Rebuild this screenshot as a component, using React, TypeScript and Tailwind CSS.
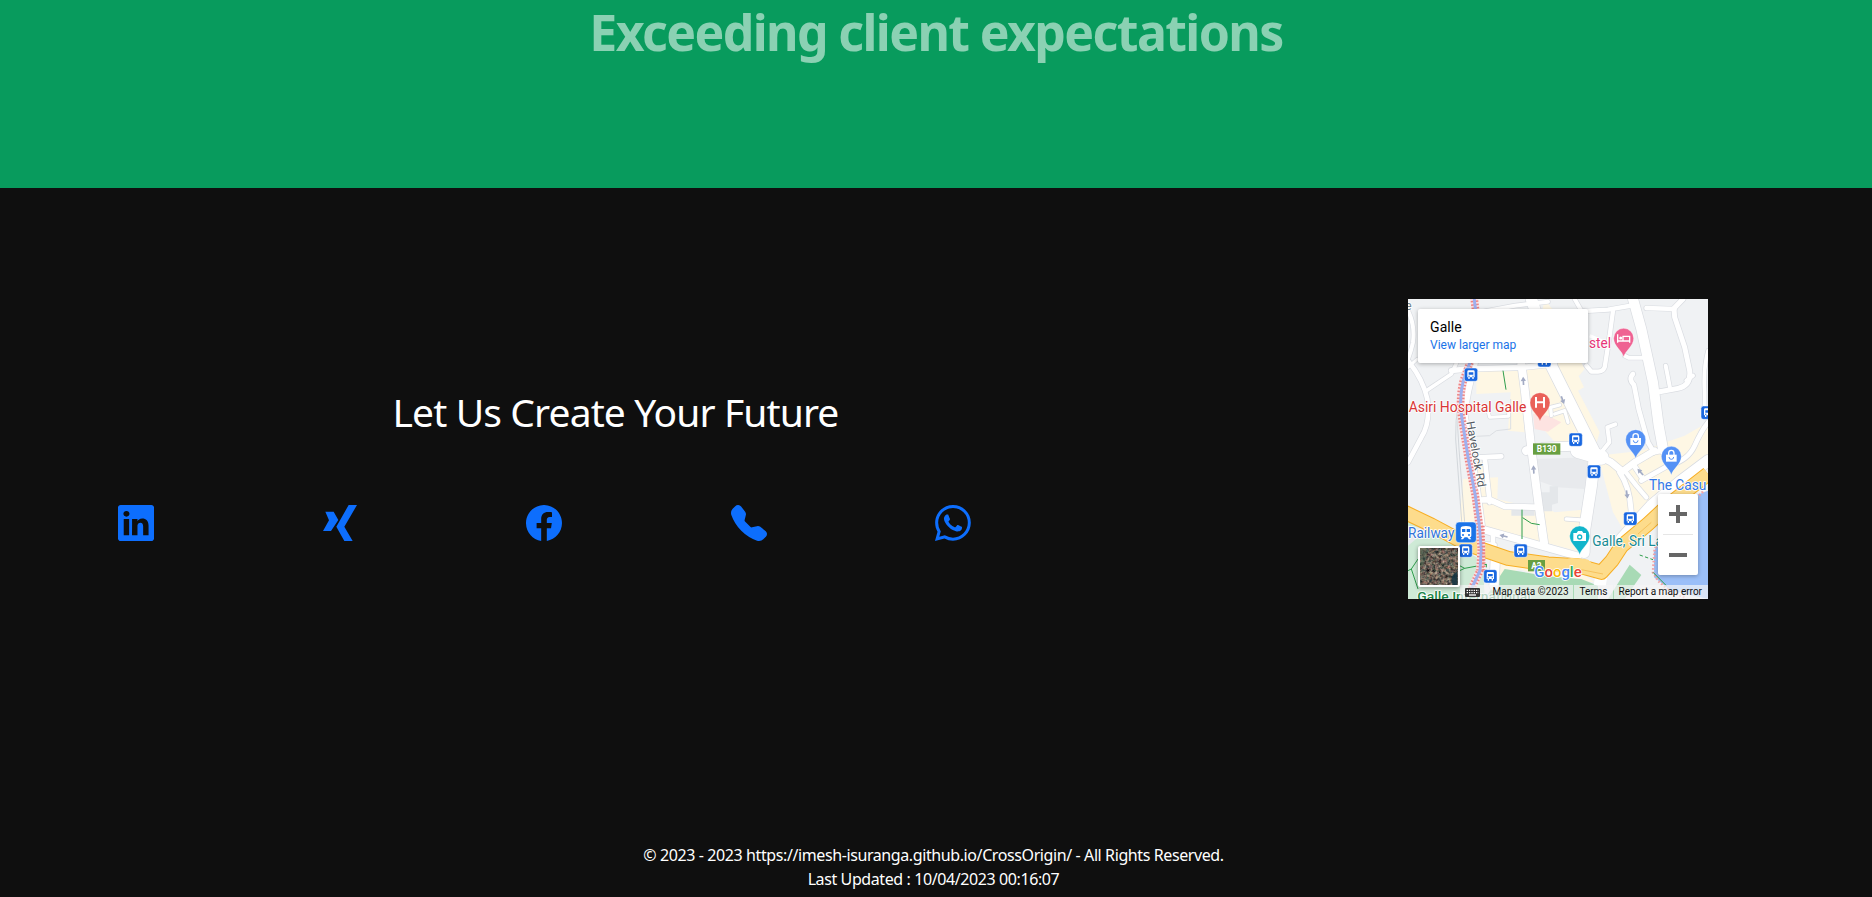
import type { ReactNode } from 'react';
import { BsLinkedin, BsFacebook, BsTelephoneFill, BsWhatsapp } from 'react-icons/bs';

const XingIcon = () => (
  <svg viewBox="0 0 102 108" className="h-9 w-[34px]" fill="currentColor" aria-hidden="true">
    <path d="M77 0h25L64 65l25 43H64L40 65z" />
    <path d="M7 20h25l14 25-22 33H0l18-32z" />
  </svg>
);

const socials = [
  { name: 'LinkedIn', icon: <BsLinkedin size={36} /> },
  { name: 'Xing', icon: <XingIcon /> },
  { name: 'Facebook', icon: <BsFacebook size={36} /> },
  { name: 'Phone', icon: <BsTelephoneFill size={36} /> },
  { name: 'WhatsApp', icon: <BsWhatsapp size={36} /> },
];

const roads: { d: string; w: number }[] = [
  { d: 'M0 35 Q22 80 15 130 Q8 160 0 180', w: 12 },
  { d: 'M0 185 Q45 240 58 300 Q68 370 40 415 L0 490', w: 14 },
  { d: 'M0 205 L28 180', w: 9 },
  { d: 'M55 275 L130 225 L165 150', w: 11 },
  { d: 'M130 215 L175 210 L345 205 L440 195', w: 16 },
  { d: 'M200 190 L180 275 L168 340 L180 420 L205 560 L222 690', w: 20 },
  { d: 'M215 40 L320 20 L420 8', w: 12 },
  { d: 'M370 0 L390 60 L430 200 L500 340 L560 460', w: 34 },
  { d: 'M340 195 L350 270 L370 450 L392 620 L408 730', w: 24 },
  { d: 'M355 455 L375 450', w: 26 },
  { d: 'M405 445 L530 440', w: 28 },
  { d: 'M510 455 L580 475', w: 44 },
  { d: 'M560 470 L550 560 L530 690 L528 760', w: 34 },
  { d: 'M475 660 L520 663', w: 11 },
  { d: 'M240 335 L245 355 L302 352 L302 330', w: 9 },
  { d: 'M215 475 L280 472 M230 475 L245 610', w: 14 },
  { d: 'M215 603 L245 602 L290 622 L395 625', w: 17 },
  { d: 'M220 690 L320 718 L510 772', w: 22 },
  { d: 'M255 700 L255 740 M225 735 L260 738', w: 14 },
  { d: 'M262 780 L258 860', w: 28 },
  { d: 'M430 350 L428 325 L455 318 M440 345 L470 335 L480 370', w: 10 },
  { d: 'M500 0 L520 35', w: 12 },
  { d: 'M530 36 L600 32 L680 18', w: 13 },
  { d: 'M615 35 L605 110 L590 205 Q585 218 570 218 L550 218 L535 200', w: 13 },
  { d: 'M675 0 L700 90 L735 250 L752 380 L765 450', w: 30 },
  { d: 'M650 170 L662 176 L710 176', w: 12 },
  { d: 'M715 27 L800 30', w: 13 },
  { d: 'M825 0 L798 28 L800 55 L830 145 L845 215 Q850 260 810 268 L755 278', w: 15 },
  { d: 'M855 230 L835 245 M773 200 L787 272', w: 12 },
  { d: 'M675 225 Q660 240 678 258 L692 330 L720 430 L738 460', w: 14 },
  { d: 'M900 155 Q885 210 890 280 L890 320', w: 11 },
  { d: 'M580 460 L604 430 L598 385 L622 376', w: 12 },
  { d: 'M740 455 L680 490 L640 520', w: 20 },
  { d: 'M640 515 L610 490 L570 470', w: 20 },
  { d: 'M735 460 L760 456 L785 480 M900 370 Q880 395 860 440 Q840 485 780 500 L700 545', w: 14 },
  { d: 'M675 495 L705 540 M635 520 Q670 570 670 660', w: 15 },
  { d: 'M650 515 L685 560 L715 595', w: 13 },
  { d: 'M900 485 L820 545 L730 620 L640 720', w: 34 },
];

const highway = 'M-10 640 L70 678 L180 737 L300 778 L420 795 L510 800 L580 820 L612 785 L640 742 L720 675 L790 610 L900 525';
const railway = 'M198 -5 L203 35 M186 190 L166 245 Q152 300 162 360 L181 480 L202 590 L214 680 L220 750 L216 815 L190 870';

const stops: [number, number][] = [
  [189, 227], [409, 184], [503, 422], [558, 518], [667, 659],
  [338, 755], [173, 755], [247, 832], [899, 341],
];

const BusStop = ({ x, y }: { x: number; y: number }) => (
  <g transform={`translate(${x} ${y})`}>
    <rect x="-20" y="-20" width="40" height="40" rx="7" fill="#1967e0" stroke="#fff" strokeWidth="1.5" />
    <path d="M-11 -9q0-4 4-4H7q4 0 4 4V8H8v5H4V8h-8v5h-4V8h-3z" fill="#fff" />
    <path d="M-7 -7H7V0H-7zM-8 3h4v3h-4zM4 3h4v3H4z" fill="#1967e0" />
  </g>
);

const Pin = ({ x, y, color, children }: { x: number; y: number; color: string; children: ReactNode }) => (
  <g transform={`translate(${x} ${y})`}>
    <path d="M0 56 C-4 38 -30 24 -30 0 A30 30 0 1 1 30 0 C30 24 4 38 0 56z" fill={color} stroke="#fff" strokeOpacity=".5" strokeWidth="2" />
    {children}
  </g>
);

const Bag = () => (
  <g>
    <path d="M-16 -5H16V16H-16z" fill="#fff" />
    <path d="M-8 -4v-6a8 8 0 0 1 16 0v6" fill="none" stroke="#fff" strokeWidth="4" />
    <path d="M-7 2a7 7 0 0 0 14 0" fill="none" stroke="#5491f5" strokeWidth="3" />
  </g>
);

const Arrow = ({ x, y, r }: { x: number; y: number; r: number }) => (
  <path
    transform={`translate(${x} ${y}) rotate(${r})`}
    d="M0 -13 L8 0 H2.5 V12 H-2.5 V0 H-8z"
    fill="#a3abc4"
  />
);

const MapDrawing = () => (
  <svg viewBox="0 0 900 900" className="block h-[300px] w-[300px] font-[Roboto,sans-serif]">
    <rect width="900" height="900" fill="#f0f2f4" />
    {/* commercial areas */}
    <g fill="#fef7e4">
      <path d="M205 215H335L350 400 300 395 308 280 205 285z" />
      <path d="M350 200H440L560 450 450 440 380 360z" />
      <path d="M410 0 L440 40 530 210 512 232 528 265 510 275 575 400 560 450 390 100z" />
      <path d="M165 540 L270 535 268 600 390 630 395 730 230 690 190 690 155 670z" />
      <path d="M205 490H235V545H205z" />
      <path d="M440 640 L550 630 520 760 410 730 400 620z" />
      <path d="M570 470 L700 455 830 410 900 370V500L650 700 615 640z" />
      <path d="M265 790 420 800 500 810 560 850 400 830 330 810 280 850z" />
    </g>
    <path d="M385 480 540 475 530 570 445 565 390 545z" fill="#e8eaed" />
    <path d="M395 580h30v-18h25v50l-18 5v20h-30zM310 625h70v25h-70z" fill="#e4e7ea" />
    <path d="M375 345 420 350 460 370 420 398 380 390z" fill="#fde3e1" />
    {/* parks */}
    <path d="M0 665 90 700 150 745 225 785 230 900H0z" fill="#ceead6" />
    <path d="M0 680 60 690 0 740z" fill="#e8eaed" />
    <path d="M260 855 290 810 420 832 520 840 570 860V900H230z" fill="#a8dab5" />
    <path d="M665 797 700 828 650 900 600 900z" fill="#a8dab5" />
    {/* water */}
    <path d="M900 575 860 590 760 700 738 760 738 835 790 875 900 900z" fill="#9bbff8" />
    <path d="M885 578 760 700 740 750 735 820 750 845 790 880 830 895" fill="none" stroke="#f0a3a8" strokeWidth="8" strokeDasharray="5 6" />
    {/* minor roads */}
    <path d="M205 412 L245 410 L265 395 L308 390 V300" fill="none" stroke="#dcdfe3" strokeWidth="3" />
    <g fill="none" strokeLinecap="round" strokeLinejoin="round">
      {roads.map((r) => (
        <path key={r.d} d={r.d} stroke="#d9dce1" strokeWidth={r.w + 4} />
      ))}
      {roads.map((r) => (
        <path key={r.d} d={r.d} stroke="#fff" strokeWidth={r.w} />
      ))}
    </g>
    <path d="M183 190 Q140 310 143 420 L162 680 M170 240 Q140 320 153 450 L170 670" fill="none" stroke="#cdd1d6" strokeWidth="2.5" />
    <path d="M545 110 L590 130" stroke="#fff" strokeWidth="10" />
    <path d="M580 830 L575 860" stroke="#fff" strokeWidth="36" />
    {/* trunk road */}
    <g fill="none" strokeLinejoin="round">
      <path d={highway} stroke="#f7ae24" strokeWidth="45" />
      <path d={highway} stroke="#fddc8c" strokeWidth="39" />
      <path d="M490 800 L530 803" stroke="#fddc8c" strokeWidth="46" strokeLinecap="round" />
      <path d="M520 812 L585 825 M690 705 L730 670" stroke="#f3bd55" strokeWidth="2.5" />
    </g>
    <g fill="none" stroke="#2f9e4c" strokeWidth="3">
      <path d="M285 215 L294 272 M342 632 L342 720 M344 656 L370 673 L395 677" />
      <path d="M0 815 10 810 30 780M10 810 30 870M155 800 170 808 235 796M170 808 155 815M735 820 775 860" />
      <path d="M695 768 735 782M235 795V830" strokeDasharray="10 7" />
    </g>
    {/* railway */}
    <g fill="none">
      <path d={railway} stroke="#fbe1e4" strokeWidth="24" />
      <path d={railway} stroke="#ec8584" strokeWidth="23" strokeDasharray="4.5 5.5" />
      <path d={railway} stroke="#9eb0ef" strokeWidth="9" />
      <path d="M225 680 L228 820" stroke="#ec8584" strokeWidth="10" strokeDasharray="4.5 5.5" />
    </g>
    <Arrow x={346} y={246} r={-3} />
    <Arrow x={464} y={303} r={160} />
    <Arrow x={377} y={512} r={-3} />
    <Arrow x={287} y={711} r={-76} />
    <Arrow x={657} y={586} r={172} />
    <Arrow x={697} y={519} r={-42} />
    {stops.map(([x, y]) => (
      <BusStop key={`${x}-${y}`} x={x} y={y} />
    ))}
    <g transform="translate(174 700)">
      <rect x="-31" y="-31" width="62" height="62" rx="10" fill="#1a73e8" stroke="#fff" strokeWidth="1.5" />
      <path d="M-16 -12q0-7 16-7t16 7V10q0 5-5 5l5 6H9l-5-6h-8l-5 6h-7l5-6q-5 0-5-5z" fill="#fff" />
      <path d="M-12 -10H-2V-1H-12zM2 -10H12V-1H2z" fill="#1a73e8" />
      <circle cx="-9" cy="8" r="3" fill="#1a73e8" />
      <circle cx="9" cy="8" r="3" fill="#1a73e8" />
    </g>
    <rect x="375" y="433" width="82" height="34" fill="#689f41" />
    <text x="416" y="459" fontSize="25" fontWeight="700" fill="#fff" textAnchor="middle">B130</text>
    <rect x="360" y="783" width="51" height="34" fill="#689f41" />
    <text x="385" y="809" fontSize="25" fontWeight="700" fill="#fff" textAnchor="middle">A2</text>
    <Pin x={396} y={311} color="#ea6159">
      <path d="M-12 -17V15M12 -17V15M-12 -1H12" stroke="#fff" strokeWidth="6" fill="none" />
    </Pin>
    <Pin x={647} y={118} color="#ef6292">
      <path d="M-18 -12V13M-18 8H18V13M18 8V-6H-2V6" stroke="#fff" strokeWidth="4" fill="none" />
      <circle cx="-9" cy="-1" r="4.5" fill="#fff" />
    </Pin>
    <Pin x={683} y={422} color="#5491f5"><Bag /></Pin>
    <Pin x={790} y={472} color="#5491f5"><Bag /></Pin>
    <Pin x={515} y={711} color="#12b5cb">
      <path d="M-19 -9H-9L-5 -15H7L11 -9H19V15H-19z" fill="#fff" />
      <circle cx="0" cy="3" r="8" fill="#12b5cb" />
      <circle cx="0" cy="3" r="4" fill="#fff" />
    </Pin>
    <g fontSize="43" stroke="#fff" strokeWidth="5" strokeLinejoin="round" paintOrder="stroke" lengthAdjust="spacingAndGlyphs">
      <text x="-8" y="34" fontSize="36" fill="#6a7f8c">e</text>
      <text x="2" y="340" fill="#d93636" textLength="353" lengthAdjust="spacingAndGlyphs">Asiri Hospital Galle</text>
      <text x="543" y="147" fill="#e73578" textLength="66" lengthAdjust="spacingAndGlyphs">stel</text>
      <text x="0" y="716" fill="#2f73d9" textLength="139" lengthAdjust="spacingAndGlyphs">Railway</text>
      <text x="723" y="573" fill="#3478e5" textLength="172" lengthAdjust="spacingAndGlyphs">The Casu</text>
      <text x="553" y="741" fill="#188a93" textLength="212" lengthAdjust="spacingAndGlyphs">Galle, Sri La</text>
      <text x="28" y="906" fontSize="38" fontWeight="500" fill="#1b8548" textLength="340" lengthAdjust="spacingAndGlyphs">Galle International</text>
      <text transform="translate(175 369) rotate(80)" fontSize="35" fill="#555b63" textLength="200" lengthAdjust="spacingAndGlyphs">Havelock Rd</text>
    </g>
    <text x="379" y="835" fontSize="46" fontWeight="500" stroke="#fff" strokeWidth="5" paintOrder="stroke" textLength="142" lengthAdjust="spacingAndGlyphs">
      <tspan fill="#4285f4">G</tspan><tspan fill="#ea4335">o</tspan><tspan fill="#fbbc04">o</tspan><tspan fill="#4285f4">g</tspan><tspan fill="#34a853">l</tspan><tspan fill="#ea4335">e</tspan>
    </text>
  </svg>
);

const Satellite = () => (
  <svg viewBox="0 0 38 38" className="h-full w-full">
    <filter id="terrain" x="0" y="0" width="100%" height="100%" colorInterpolationFilters="sRGB">
      <feTurbulence type="fractalNoise" baseFrequency=".32" numOctaves="4" seed="8" />
      <feColorMatrix values=".9 .3 0 0 -.18  .6 .5 0 0 -.17  .5 .4 .1 0 -.16  0 0 0 0 1" />
    </filter>
    <rect width="38" height="38" filter="url(#terrain)" />
    <path d="M38 24 Q29 29 33 38H38z" fill="#173542" opacity=".9" />
    <path d="M0 0 8 0 4 16 0 22z" fill="#405746" opacity=".5" />
  </svg>
);

const Keyboard = () => (
  <svg viewBox="0 0 45 27" className="h-[9px] w-[15px]">
    <rect width="45" height="27" rx="3" fill="#333" />
    <path d="M5 7H41M5 14H41" stroke="#fff" strokeWidth="4" strokeDasharray="4 3" />
    <path d="M12 21H33" stroke="#fff" strokeWidth="4" />
  </svg>
);

const MapWidget = () => (
  <div className="relative h-[300px] w-[300px] shrink-0 overflow-hidden font-[Roboto,sans-serif]">
    <MapDrawing />
    <div className="absolute top-[10px] left-[10px] h-[54px] w-[170px] rounded-[2px] bg-white pt-[9px] pl-[12px] shadow-[0_1px_4px_rgba(0,0,0,0.3)]">
      <div className="text-[14px] leading-[18px] tracking-[0.1px] text-black">Galle</div>
      <div className="mt-px text-[12px] leading-[16px] text-[#1a73e8]">View larger map</div>
    </div>
    <div className="absolute top-[195px] left-[250px] flex h-[81px] w-[40px] flex-col items-center rounded-[2px] bg-white shadow-[0_1px_4px_rgba(0,0,0,0.3)]">
      <svg viewBox="0 0 18 18" className="my-[11px] h-[18px] w-[18px] shrink-0">
        <path d="M7 0h4v7h7v4h-7v7H7v-7H0V7h7z" fill="#666" />
      </svg>
      <div className="h-px w-[30px] shrink-0 bg-[#e6e6e6]" />
      <svg viewBox="0 0 18 18" className="my-[11px] h-[18px] w-[18px] shrink-0">
        <path d="M0 7h18v4H0z" fill="#666" />
      </svg>
    </div>
    <div className="absolute right-0 bottom-0 flex h-[14px] items-center text-[10px] leading-[14px] text-[#111]">
      <div className="flex h-[14px] items-center bg-[#f5f5f5]/70 px-[5px]"><Keyboard /></div>
      <div className="h-[14px] bg-[#f5f5f5]/70 pr-[6px] pl-[7px]"><span className="inline-block w-[75px] tracking-[0.1px] whitespace-nowrap">Map data ©2023</span></div>
      <div className="ml-px h-[14px] bg-[#f5f5f5]/70 pr-[5px] pl-[5px]">Terms</div>
      <div className="ml-px h-[14px] bg-[#f5f5f5]/70 pr-[6px] pl-[5px] whitespace-nowrap">Report a map error</div>
    </div>
    <div className="absolute top-[247px] left-[10px] h-[41px] w-[42px] rounded-[2px] border-2 border-white bg-white shadow-[0_1px_4px_rgba(0,0,0,0.4)]">
      <Satellite />
    </div>
  </div>
);

export default function App() {
  return (
    <div className="flex h-[897px] w-full flex-col overflow-hidden bg-[#0f0f0f] font-['Noto_Sans',sans-serif] text-white">
      <section className="flex h-[188px] shrink-0 justify-center bg-[#089b5d]">
        <h1 className="text-[50px] leading-[64px] font-bold tracking-[-1.6px] whitespace-nowrap text-[#8bd1b3]">
          Exceeding client expectations
        </h1>
      </section>
      <footer className="flex grow flex-col">
        <div className="flex pt-[111px]">
          <div className="flex w-[1231px] flex-col">
            <h2 className="mt-[89px] text-center text-[39px] leading-[48px] tracking-[-0.88px] whitespace-nowrap">
              Let Us Create Your Future
            </h2>
            <nav className="mt-[69px] ml-[34px] grid w-[1021px] grid-cols-5 text-[#0d6efd]">
              {socials.map((s) => (
                <a key={s.name} href="#" aria-label={s.name} className="flex h-9 justify-center">
                  {s.icon}
                </a>
              ))}
            </nav>
          </div>
          <div className="ml-[177px]">
            <MapWidget />
          </div>
        </div>
        <div className="mt-auto flex flex-col items-center pr-[5px] pb-[6px] text-[16px] leading-6 tracking-[-0.4px]">
          <p className="whitespace-nowrap">© 2023 - 2023 https://imesh-isuranga.github.io/CrossOrigin/ - All Rights Reserved.</p>
          <p className="whitespace-nowrap">Last Updated : 10/04/2023 00:16:07</p>
        </div>
      </footer>
    </div>
  );
}
